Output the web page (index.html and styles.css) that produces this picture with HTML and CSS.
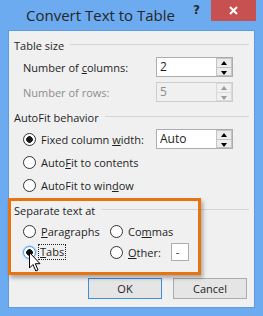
FILE: index.html
```html
<!DOCTYPE html>
<html lang="en">
<head>
    <meta charset="UTF-8">
    <title>Convert Text to Table</title>
    <link rel="stylesheet" href="styles.css">
</head>
<body>
    <div class="window">
        <!-- Title bar -->
        <div class="titlebar">
            <span class="title">Convert Text to Table</span>
            <span class="help">?</span>
            <span class="close">
                <svg width="9" height="9" viewBox="0 0 9 9"><path d="M1 1 L8 8 M8 1 L1 8" stroke="#fff" stroke-width="2"/></svg>
            </span>
        </div>

        <div class="client">
            <!-- Table size -->
            <div class="group-head"><span>Table size</span></div>
            <div class="field first">
                <span class="label">Number of <u>c</u>olumns:</span>
                <div class="spin">
                    <span class="spin-value">2</span>
                    <span class="spin-btns"><i class="up"></i><i class="down"></i></span>
                </div>
            </div>
            <div class="field disabled">
                <span class="label">Number of rows:</span>
                <div class="spin">
                    <span class="spin-value">5</span>
                    <span class="spin-btns"><i class="up"></i><i class="down"></i></span>
                </div>
            </div>

            <!-- AutoFit behavior -->
            <div class="group-head second"><span>AutoFit behavior</span></div>
            <div class="field fixed">
                <span class="label"><span class="radio checked"></span>Fixed column <u>w</u>idth:</span>
                <div class="spin">
                    <span class="spin-value">Auto</span>
                    <span class="spin-btns"><i class="up"></i><i class="down"></i></span>
                </div>
            </div>
            <div class="option"><span class="radio"></span>Auto<u>F</u>it to contents</div>
            <div class="option"><span class="radio"></span>AutoFit to win<u>d</u>ow</div>

            <!-- Separate text at -->
            <div class="group-head third"><span>Separate text at</span></div>
            <div class="option-row first">
                <div class="option-cell"><span class="radio"></span><u>P</u>aragraphs</div>
                <div class="option-cell"><span class="radio"></span><span>Co<u>m</u>mas</span></div>
            </div>
            <div class="option-row">
                <div class="option-cell"><span class="radio hot"></span><span class="focus"><u>T</u>abs</span></div>
                <div class="option-cell"><span class="radio"></span><span><u>O</u>ther:</span><span class="other-box">-</span></div>
            </div>

            <div class="buttons">
                <button class="btn default">OK</button>
                <button class="btn">Cancel</button>
            </div>
        </div>

        <!-- annotation over the dialog -->
        <div class="highlight"></div>
        <svg class="pointer" width="13" height="21" viewBox="0 0 13 21">
            <path d="M0.5 0.5 L0.5 16 L4 12.5 L6.8 19 L9 18 L6.3 11.7 L11 11.7 Z" fill="#fff" stroke="#000" stroke-width="1" stroke-linejoin="round"/>
        </svg>
    </div>
</body>
</html>
```

FILE: styles.css
```css
/* Global */
body {
    margin: 0;
    font-family: "Open Sans", "Noto Sans", sans-serif;
    font-size: 11px;
    color: #1e1e1e;
}

u {
    text-decoration: underline;
    text-underline-offset: 1px;
}

/* Window frame */
.window {
    position: relative;
    width: 263px;
    height: 316px;
    background: #6cabf0;
    overflow: hidden;
}

.titlebar {
    display: flex;
    align-items: flex-start;
    height: 30px;
}

.title {
    flex: 1;
    padding-left: 26px;
    font-size: 15px;
    line-height: 31px;
    color: #262626;
}

.help {
    margin-top: 3px;
    margin-right: 11px;
    font-family: "DejaVu Sans", sans-serif;
    font-size: 12px;
    font-weight: bold;
    color: #262a30;
}

.close {
    display: flex;
    align-items: center;
    justify-content: center;
    width: 45px;
    height: 21px;
    margin-right: 7px;
    background: #c75050;
}

/* Client area */
.client {
    box-sizing: border-box;
    width: 247px;
    height: 278px;
    margin-left: 8px;
    background: #f0f0f0;
    border: 1px solid #5d9ce2;
}

.group-head {
    display: flex;
    align-items: center;
    height: 16px;
    margin-top: 6px;
    padding: 0 5px;
}

.group-head::after {
    content: "";
    flex: 1;
    margin-left: 6px;
    margin-top: -2px;
    border-top: 1px solid #d5d5d5;
}

.group-head.second {
    margin-top: 7px;
}

.group-head.third {
    margin-top: 7px;
}

.field {
    display: flex;
    align-items: center;
    height: 20px;
    margin-top: 5px;
    padding-left: 14px;
}

.field.first {
    margin-top: 4px;
}

.field.fixed {
    margin-top: 4px;
}

.label {
    display: block;
    width: 133px;
    white-space: nowrap;
}

.label .radio {
    vertical-align: -2px;
}

.disabled .label {
    color: #8d8d8d;
}

/* Spin boxes */
.spin {
    box-sizing: border-box;
    display: flex;
    width: 77px;
    height: 20px;
    background: #fff;
    border: 1px solid #abadb3;
}

.spin-value {
    flex: 1;
    padding-left: 3px;
    font-size: 12px;
    line-height: 18px;
}

.spin-btns {
    display: flex;
    flex-direction: column;
    width: 16px;
}

.spin-btns i {
    flex: 1;
    position: relative;
    background: #ececec;
    border: 1px solid #c4c4c4;
}

.spin-btns i + i {
    border-top: none;
}

.spin-btns i::after {
    content: "";
    position: absolute;
    left: 4px;
    top: 2px;
    border-left: 3px solid transparent;
    border-right: 3px solid transparent;
}

.spin-btns .up::after {
    border-bottom: 4px solid #000;
}

.spin-btns .down::after {
    top: 3px;
    border-top: 4px solid #000;
}

.disabled .spin {
    background: #f0f0f0;
    border-color: #cdcdcd;
}

.disabled .spin-value {
    color: #8d8d8d;
}

.disabled .spin-btns i {
    background: #f0f0f0;
    border-color: #dadada;
}

.disabled .spin-btns .up::after {
    border-bottom-color: #9a9a9a;
}

.disabled .spin-btns .down::after {
    border-top-color: #9a9a9a;
}

/* Radio buttons */
.radio {
    box-sizing: border-box;
    display: inline-block;
    width: 13px;
    height: 13px;
    margin-right: 5px;
    flex-shrink: 0;
    border: 1px solid #333;
    border-radius: 50%;
    background: #fff;
}

.radio.checked {
    background: radial-gradient(circle, #1a1a1a 0, #1a1a1a 3px, #fff 3.6px);
}

.radio.hot {
    border-color: #3c9aef;
    box-shadow: 0 0 0 1px #bfdcf8;
    background: radial-gradient(circle, #111 0, #111 3px, #fff 3.6px);
}

.option {
    display: flex;
    align-items: center;
    height: 20px;
    margin-top: 3px;
    padding-left: 14px;
    white-space: pre;
}

.option-row {
    display: flex;
    align-items: center;
    height: 20px;
    margin-top: 1px;
    padding-left: 14px;
}

.option-row.first {
    margin-top: 3px;
}

.option-cell {
    display: flex;
    align-items: center;
    width: 87px;
}

.focus {
    padding: 0 1px;
    margin-left: -2px;
    line-height: 14px;
    outline: 1px dotted #222;
}

.other-box {
    box-sizing: border-box;
    width: 18px;
    height: 18px;
    margin-left: 10px;
    padding-left: 4px;
    line-height: 16px;
    background: #fff;
    border: 1px solid #abadb3;
}

/* Buttons */
.buttons {
    display: flex;
    justify-content: flex-end;
    gap: 11px;
    margin-top: 16px;
    padding-right: 7px;
}

.btn {
    box-sizing: border-box;
    width: 74px;
    height: 21px;
    padding: 0;
    font-family: "Open Sans", "Noto Sans", sans-serif;
    font-size: 11px;
    color: #1e1e1e;
    background: #e5e5e5;
    border: 1px solid #acacac;
}

.btn.default {
    border-color: #3c8fe0;
}

/* Annotation overlay */
.highlight {
    position: absolute;
    left: 8px;
    top: 198px;
    width: 193px;
    height: 77px;
    box-sizing: border-box;
    border: 3px solid #e8730f;
    box-shadow: 2px 3px 4px rgba(0, 0, 0, 0.3);
}

.pointer {
    position: absolute;
    left: 29px;
    top: 252px;
}
```
